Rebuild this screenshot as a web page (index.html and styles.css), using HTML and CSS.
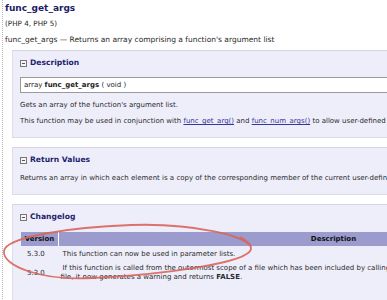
FILE: index.html
```html
<!DOCTYPE html>
<html lang="en">

<head>
    <meta charset="UTF-8">
    <title>func_get_args</title>
    <link rel="stylesheet" href="styles.css">
</head>

<body>

    <div class="page">
        <h1 class="refname">func_get_args</h1>
        <p class="verinfo">(PHP 4, PHP 5)</p>
        <p class="refpurpose">func_get_args &mdash; Returns an array comprising a function's argument list</p>

        <!-- Description -->
        <div class="section">
            <h3 class="section-title"><span class="toggle"></span>Description</h3>
            <div class="synopsis">array <b>func_get_args</b> ( void )</div>
            <p class="para first">Gets an array of the function's argument list.</p>
            <p class="para">This function may be used in conjunction with <a href="#">func_get_arg()</a> and <a href="#">func_num_args()</a> to allow user-defined functions to accept variable-length argument lists.</p>
        </div>

        <!-- Return Values -->
        <div class="section">
            <h3 class="section-title"><span class="toggle"></span>Return Values</h3>
            <p class="para first">Returns an array in which each element is a copy of the corresponding member of the current user-defined function's argument list.</p>
        </div>

        <!-- Changelog -->
        <div class="section last">
            <h3 class="section-title"><span class="toggle"></span>Changelog</h3>
            <table class="changelog">
                <thead>
                    <tr>
                        <th class="col-version">Version</th>
                        <th>Description</th>
                    </tr>
                </thead>
                <tbody>
                    <tr>
                        <td class="col-version">5.3.0</td>
                        <td>This function can now be used in parameter lists.</td>
                    </tr>
                    <tr>
                        <td class="col-version">5.3.0</td>
                        <td>If this function is called from the outermost scope of a file which has been included by calling require() or include() from within a function in the calling<br>file, it now generates a warning and returns <b>FALSE</b>.</td>
                    </tr>
                </tbody>
            </table>
        </div>
    </div>

    <!-- hand drawn highlight -->
    <svg class="scribble" width="387" height="300" viewBox="0 0 387 300">
        <path d="M251 249 C252 236 192 223 131 225 C70 227 6 237 4 251 C2 266 42 281 92 278 C160 275 249 263 251 249 C252 244 246 240 240 237"
            fill="none" stroke="#d8655c" stroke-width="1.8" stroke-opacity="0.9" />
    </svg>

</body>

</html>
```

FILE: styles.css
```css
/* Global Styles */
html,
body {
    margin: 0;
    padding: 0;
    overflow: hidden;
    background-color: #fff;
}

body {
    font-family: "DejaVu Sans", Verdana, sans-serif;
    font-size: 7px;
    color: #2a2a2a;
    position: relative;
}

.page {
    width: 660px;
    min-height: 300px;
    margin-left: 2px;
    padding-left: 2px;
    border-left: 1px dotted #b5b5b5;
}

.refname {
    margin: 0;
    padding-top: 2px;
    font-size: 9px;
    line-height: 13px;
    color: #1c1c66;
}

.verinfo {
    margin: 4px 0 0;
    font-size: 7.2px;
    line-height: 10px;
}

.refpurpose {
    margin: 6px 0 0;
    font-size: 7.5px;
    line-height: 10px;
}

/* Sections */
.section {
    margin: 5px 0 0 7px;
    padding: 6px 0 11px 7px;
    background-color: #eeeefa;
    border-top: 1px solid #d6d6e2;
    border-left: 1px solid #dedee8;
    border-bottom: 1px solid #dcdce6;
}

.section + .section {
    margin-top: 9px;
}

.section.last {
    min-height: 100px;
}

.section-title {
    display: flex;
    align-items: center;
    gap: 3px;
    margin: 0;
    font-size: 7.6px;
    line-height: 12px;
    color: #1f1f6e;
}

.toggle {
    width: 5px;
    height: 5px;
    border: 1px solid #777;
    background-color: #f6f6f6;
    position: relative;
}

.toggle::after {
    content: "";
    position: absolute;
    left: 1px;
    right: 1px;
    top: 2px;
    height: 1px;
    background-color: #555;
}

.synopsis {
    margin-top: 8px;
    padding-left: 3px;
    line-height: 14px;
    background-color: #fff;
    border: 1px solid #9a9a9a;
    border-right: none;
    color: #222;
}

.para {
    margin: 6px 0 0;
    line-height: 10px;
    white-space: nowrap;
}

.para.first {
    margin-top: 7px;
}

.para a {
    color: #36369a;
}

/* Changelog table */
.changelog {
    margin-top: 9px;
    margin-left: 1px;
    width: 587px;
    border-collapse: collapse;
    font-size: 7px;
}

.changelog th {
    height: 14px;
    padding: 0;
    background-color: #9b9bce;
    color: #111;
    text-align: center;
}

.changelog th + th {
    border-left: 1px solid #fff;
}

.changelog td {
    padding: 3px 0 3px 2px;
    line-height: 10px;
    text-indent: 2px;
    vertical-align: middle;
}

.changelog tbody tr + tr td {
    line-height: 9px;
    padding-top: 2px;
}

.changelog td.col-version {
    width: 31px;
    padding-left: 6px;
    text-indent: 0;
}

.changelog th.col-version {
    width: 37px;
}

/* Highlight overlay */
.scribble {
    position: absolute;
    left: 0;
    top: 0;
    pointer-events: none;
}
```
